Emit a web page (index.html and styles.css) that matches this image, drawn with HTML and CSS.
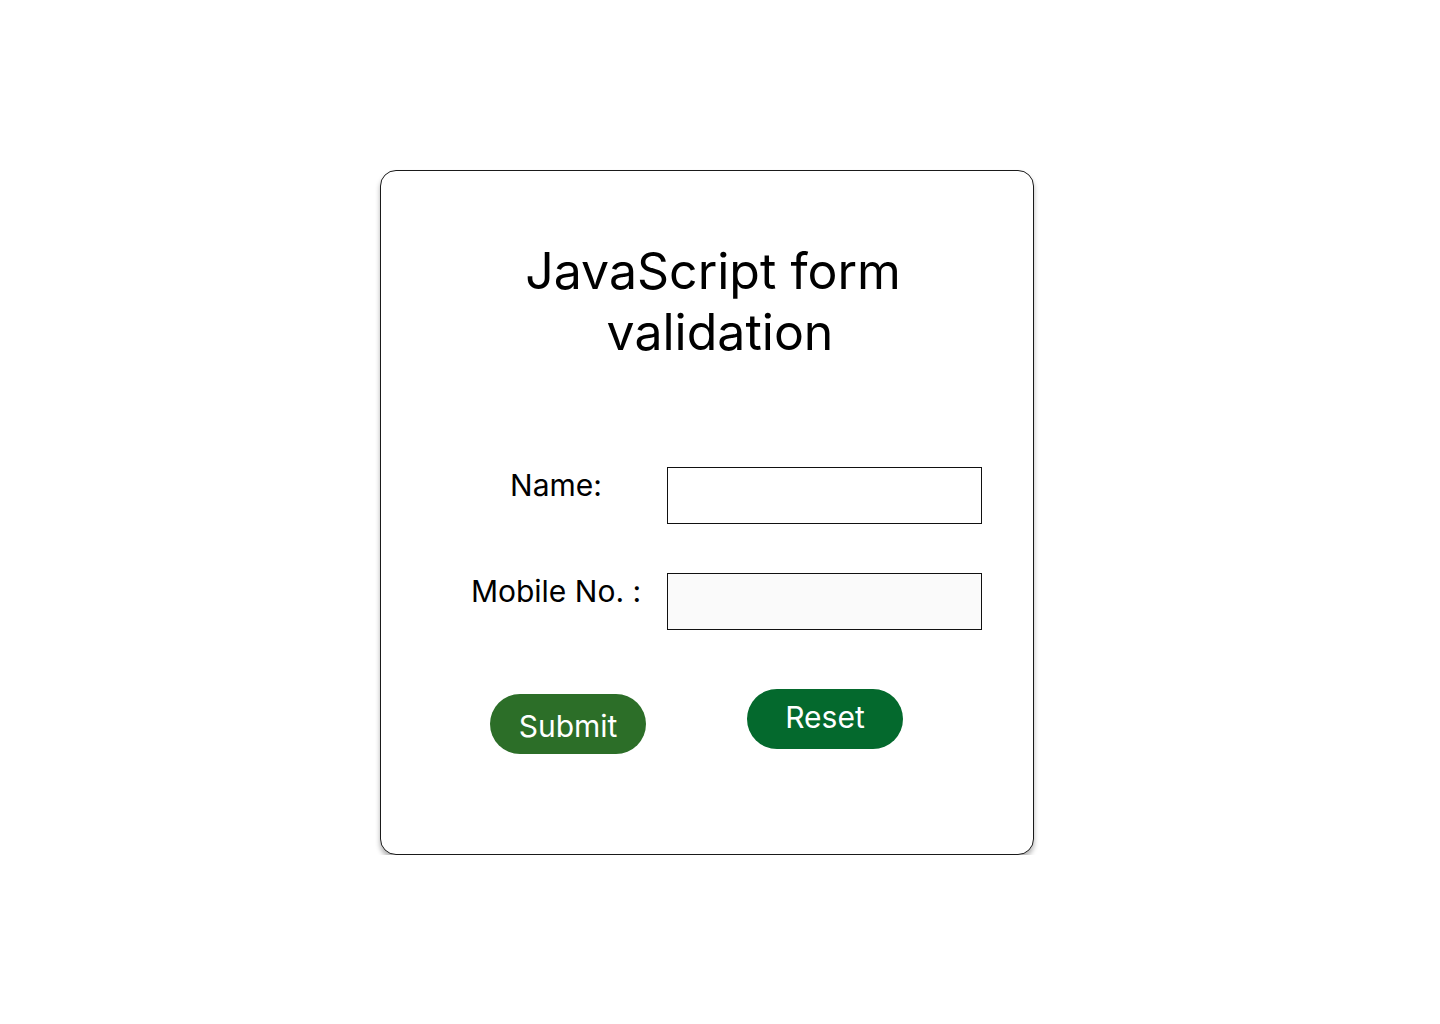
FILE: index.html
```html
<!DOCTYPE html>
<html lang="en">
<head>
<meta charset="utf-8">
<title>JavaScript form validation</title>
<link rel="stylesheet" href="styles.css">
</head>
<body>
<main class="card">
  <h1 class="title">JavaScript form<br>validation</h1>
  <form class="form" onsubmit="return false">
    <div class="fields">
      <label class="label" for="name">Name:</label>
      <input class="input" id="name" type="text">
      <label class="label" for="mobile">Mobile No. :</label>
      <input class="input input-alt" id="mobile" type="text">
    </div>
    <div class="actions">
      <button class="btn btn-submit" type="submit">Submit</button>
      <button class="btn btn-reset" type="reset">Reset</button>
    </div>
  </form>
</main>
</body>
</html>
```
FILE: styles.css
```css
* { box-sizing: border-box; }
html, body { margin: 0; padding: 0; background: #fff; }
body {
  font-family: Inter, "Noto Sans", sans-serif;
  color: #000;
  padding: 170px 0 0 380px;
}
.card {
  width: 654px;
  height: 685px;
  border: 1px solid #1a1a1a;
  border-radius: 16px;
  box-shadow: 0 4px 5px rgba(0,0,0,0.3);
  background: #fff;
  padding: 70px 0 0 0;
}
.title {
  margin: 0;
  padding-left: 26px;
  text-indent: -14px;
  font-size: 50px;
  font-weight: 400;
  line-height: 61px;
  text-align: center;
}
.form { margin-top: 104px; }
.fields {
  display: grid;
  grid-template-columns: 192px 315px;
  column-gap: 15px;
  row-gap: 49px;
  margin-left: 79px;
  align-items: start;
}
.label {
  font-size: 30px;
  line-height: 36px;
  text-align: center;
}
.input {
  width: 315px;
  height: 57px;
  border: 1px solid #111;
  border-radius: 0;
  background: #fff;
  font: inherit;
  font-size: 20px;
  padding: 0 10px;
  outline: none;
}
.input-alt { background: #fafafa; }
.actions {
  display: flex;
  align-items: flex-start;
  gap: 101px;
  margin: 59px 0 0 109px;
}
.btn {
  width: 156px;
  height: 60px;
  border: none;
  border-radius: 30px;
  color: #fff;
  font-family: Inter, "Noto Sans", sans-serif;
  font-size: 30px;
  line-height: 36px;
  padding: 0;
  cursor: pointer;
}
.btn-submit {
  background: #2c6e28;
  margin-top: 5px;
  padding-top: 4px;
}
.btn-reset {
  background: #04692d;
  padding-bottom: 4px;
}
```
